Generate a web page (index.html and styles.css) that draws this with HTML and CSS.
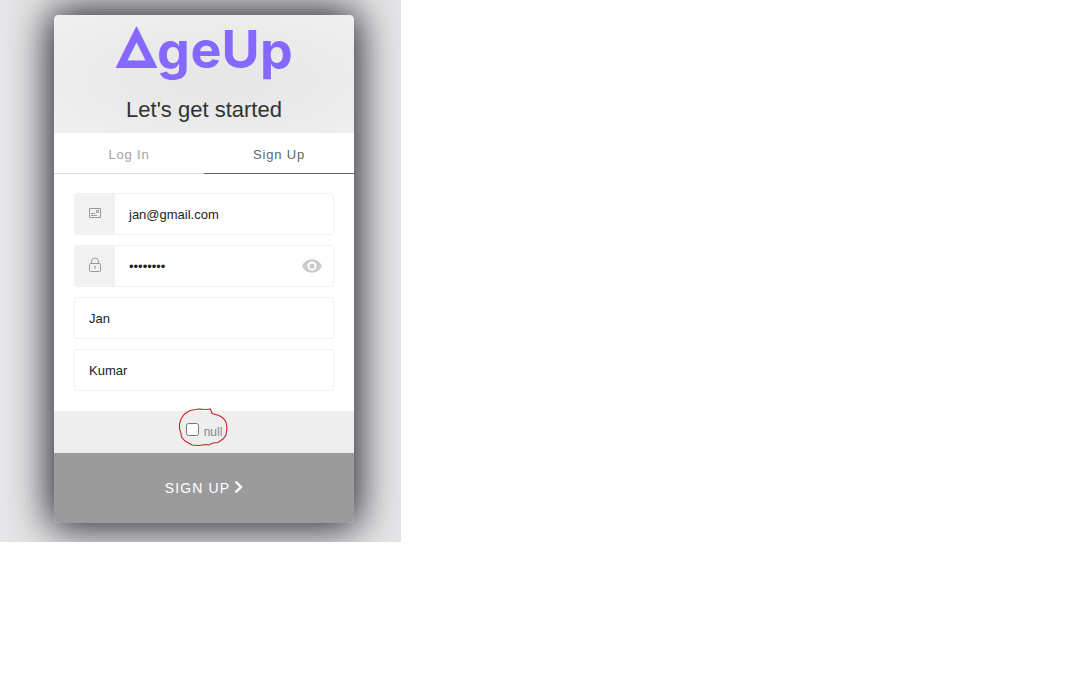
FILE: index.html
```html
<!DOCTYPE html>
<html lang="en">
<head>
<meta charset="utf-8">
<title>AgeUp - Sign Up</title>
<link rel="stylesheet" href="styles.css">
</head>
<body>
<main class="backdrop">
  <form class="card">
    <header class="header">
      <svg class="logo" width="180" height="64" viewBox="114 23 180 64" role="img" aria-label="AgeUp">
        <text class="wordmark delta" x="119.500" y="59.700">△</text>
        <text class="wordmark" x="157 190.500 221.500 260" y="69 68 68 69">geUp</text>
      </svg>
      <h1 class="title">Let's get started</h1>
    </header>
    <nav class="tabs">
      <a class="tab">Log In</a>
      <a class="tab active">Sign Up</a>
    </nav>
    <div class="fields">
      <div class="field">
        <span class="prefix">
          <svg width="14" height="14" viewBox="0 0 14 14" fill="none" stroke="#999">
            <path d="M1.500 2.500h11v9h-11zM8.500 4.500h2v2h-2zM3 7.500h4M3 9.500h6"/>
          </svg>
        </span>
        <span class="value">jan@gmail.com</span>
      </div>
      <div class="field">
        <span class="prefix">
          <svg width="14" height="16" viewBox="0 0 14 16" fill="none" stroke="#999">
            <rect x="1.500" y="6.500" width="11" height="8" rx="1"/>
            <path d="M3.500 6.500V4.800a3.500 3.700 0 0 1 7 0v1.700M7 9v3M6.500 9.500h1"/>
          </svg>
        </span>
        <span class="value">••••••••</span>
        <svg class="eye" width="20" height="14" viewBox="0 0 20 14">
          <path fill="#ccc" fill-rule="evenodd" d="M10 .3C5.500.3 1.700 3 0 7c1.700 4 5.500 6.700 10 6.700S18.300 11 20 7C18.300 3 14.500.3 10 .3zM10 11.600a4.600 4.600 0 1 1 0-9.200 4.600 4.600 0 0 1 0 9.200z"/>
          <circle cx="10" cy="7" r="2.600" fill="#ccc"/>
        </svg>
      </div>
      <div class="field"><span class="value">Jan</span></div>
      <div class="field"><span class="value">Kumar</span></div>
    </div>
    <label class="terms">
      <input class="check" type="checkbox"><span class="terms-text">null</span>
      <svg class="scribble" width="52" height="42" viewBox="177 406 52 42" fill="none" stroke="#c1272d" stroke-width="1.100">
        <path d="M212 413.500L210.500 409L206 409.500L199 409L190 410.500L184.500 414L181 419L179.500 424V429L181 433.500L181.500 437L185 441L192 445L199 445.500L206 444.500L209 445L213 443L218 442.500L223 439L226 435L227 428L226 422L223 418L219 415.500L212 413.500"/>
      </svg>
    </label>
    <button class="submit" type="button">SIGN UP
      <svg class="chevron" width="9" height="14" viewBox="0 0 9 14" fill="none" stroke="#fff" stroke-width="2.300"><path d="M1.500 1.500L7 7L1.500 12.500"/></svg>
    </button>
  </form>
</main>
</body>
</html>
```

FILE: styles.css
```css
* { box-sizing: border-box; }
body {
  margin: 0;
  background: #fff;
  font-family: "Liberation Sans", Arial, sans-serif;
}
.backdrop {
  width: 401px;
  height: 542px;
  padding: 15px 47px 0 54px;
  overflow: hidden;
  background: #e6e6e8;
}
.card {
  width: 300px;
  height: 508px;
  margin: 0;
  border-radius: 5px;
  overflow: hidden;
  background: #fff;
  box-shadow: 0 0 40px 4px rgba(17, 17, 24, 0.96);
}
.header {
  height: 118px;
  padding-top: 8px;
  display: flex;
  flex-direction: column;
  align-items: center;
  background: radial-gradient(ellipse at 55% 55%, #e6e6e6 0, #eaeaea 45%, #f1f1f1 100%);
}
.logo { display: block; overflow: visible; }
.wordmark {
  font-family: Inter, sans-serif;
  font-size: 52px;
  font-weight: 700;
  fill: #8468ff;
}
.delta {
  font-family: "DejaVu Sans", sans-serif;
  font-size: 44px;
  font-weight: 400;
  stroke: #8468ff;
  stroke-width: 5px;
  stroke-linejoin: miter;
}
.title {
  margin: 9px 0 0;
  font-size: 22px;
  line-height: 27px;
  font-weight: 400;
  color: #333;
}
.tabs { display: flex; height: 41px; }
.tab {
  flex: 1;
  padding-top: 2px;
  border-bottom: 1px solid #ddd;
  text-align: center;
  font-size: 13px;
  line-height: 40px;
  letter-spacing: 0.8px;
  color: #a3a3a8;
}
.tab.active { color: #5c666f; border-color: #5c666f; }
.fields {
  display: flex;
  flex-direction: column;
  gap: 10px;
  padding: 19px 20px 20px;
}
.field {
  display: flex;
  align-items: center;
  height: 42px;
  border: 1px solid #f1f1f1;
  border-radius: 3px;
  overflow: hidden;
}
.prefix {
  width: 40px;
  height: 40px;
  display: flex;
  align-items: center;
  justify-content: center;
  padding-bottom: 2px;
  background: #f1f1f1;
}
.value {
  flex: 1;
  padding: 2px 0 0 14px;
  font-size: 13px;
  line-height: 16px;
  color: #222;
}
.eye { margin-right: 11px; }
.terms {
  position: relative;
  display: flex;
  justify-content: center;
  height: 42px;
  padding-top: 12px;
  background: #eee;
}
.check { width: 13px; height: 13px; margin: 0 5px 0 0; }
.terms-text {
  font-size: 12px;
  line-height: 18px;
  color: #888;
}
.scribble { position: absolute; left: 123px; top: -5px; }
.submit {
  display: flex;
  align-items: center;
  justify-content: center;
  gap: 4px;
  width: 100%;
  height: 70px;
  padding: 0;
  border: 0;
  background: #9b9b9b;
  color: #fff;
  font-family: inherit;
  font-size: 14px;
  letter-spacing: 1.1px;
}
.chevron { margin-bottom: 2px; }
```
